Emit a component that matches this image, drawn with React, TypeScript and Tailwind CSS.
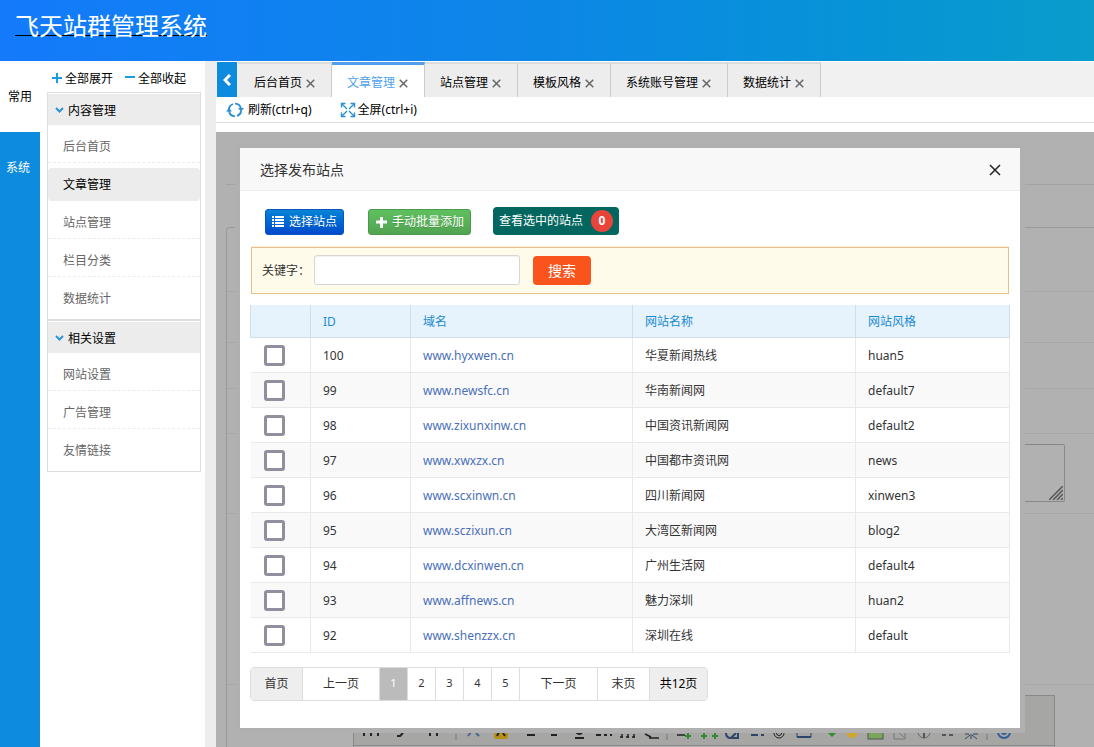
const FONT = "font-['Noto_Sans','Noto_Sans_CJK_SC',sans-serif]";

const MENU = [
  { title: "内容管理", items: ["后台首页", "文章管理", "站点管理", "栏目分类", "数据统计"] },
  { title: "相关设置", items: ["网站设置", "广告管理", "友情链接"] },
];

const TABS = ["后台首页", "文章管理", "站点管理", "模板风格", "系统账号管理", "数据统计"];

const ACTIVE = "文章管理";

const SITES = [
  { id: 100, domain: "www.hyxwen.cn", name: "华夏新闻热线", style: "huan5" },
  { id: 99, domain: "www.newsfc.cn", name: "华南新闻网", style: "default7" },
  { id: 98, domain: "www.zixunxinw.cn", name: "中国资讯新闻网", style: "default2" },
  { id: 97, domain: "www.xwxzx.cn", name: "中国都市资讯网", style: "news" },
  { id: 96, domain: "www.scxinwn.cn", name: "四川新闻网", style: "xinwen3" },
  { id: 95, domain: "www.sczixun.cn", name: "大湾区新闻网", style: "blog2" },
  { id: 94, domain: "www.dcxinwen.cn", name: "广州生活网", style: "default4" },
  { id: 93, domain: "www.affnews.cn", name: "魅力深圳", style: "huan2" },
  { id: 92, domain: "www.shenzzx.cn", name: "深圳在线", style: "default" },
];

const PAGES = ["1", "2", "3", "4", "5"];

function CloseIcon({ className }: { className: string }) {
  return (
    <svg viewBox="0 0 12 12" className={className} fill="none" stroke="currentColor" aria-hidden="true">
      <path d="M1 1l10 10M11 1L1 11" />
    </svg>
  );
}

function RefreshIcon() {
  return (
    <svg width="18" height="16" viewBox="0 0 18 16" fill="none" stroke="#2b8fd0" strokeWidth="1.8" aria-hidden="true">
      <path d="M2.8 7A6.3 6.3 0 0 1 7 2M9 1.700a6.300 6.300 0 0 1 6 5.300" />
      <path d="M15.200 9A6.300 6.300 0 0 1 11 14M9 14.300a6.300 6.300 0 0 1-6-5.300" />
      <path d="M12 6h6l-3 3.500zM6 9.500H0L3 6z" fill="#2b8fd0" stroke="none" />
    </svg>
  );
}

function FullscreenIcon() {
  return (
    <svg width="16" height="16" viewBox="0 0 16 16" fill="none" stroke="#2b8fd0" strokeWidth="1.4" aria-hidden="true">
      <path d="M1.500 5.500v-4h4M10.500 1.500h4v4M14.500 10.500v4h-4M5.500 14.500h-4v-4" />
      <path d="M2 2l5 5M14 2L9 7M14 14L9 9M2 14l5-5" />
    </svg>
  );
}

function ListIcon() {
  return (
    <svg width="12" height="12" fill="currentColor" aria-hidden="true">
      <path d="M0 0h2v2H0zM3 0h9v2H3zM0 3h2v2H0zM3 3h9v2H3zM0 6h2v2H0zM3 6h9v2H3zM0 9h2v2H0zM3 9h9v2H3z" />
    </svg>
  );
}

function PlusIcon() {
  return (
    <svg width="12" height="12" stroke="currentColor" strokeWidth="3" aria-hidden="true">
      <path d="M1 6h11M6.500 1v11" />
    </svg>
  );
}

function Header() {
  return (
    <header className="h-[61px] shrink-0 bg-linear-to-r from-[#147afb] via-[#0d87e6] to-[#0a9ccb] px-[15px] pt-2">
      <a href="#" className="text-2xl leading-9 text-white underline decoration-black decoration-1 underline-offset-0">
        飞天站群管理系统
      </a>
    </header>
  );
}

function Rail() {
  return (
    <nav className="flex w-10 shrink-0 flex-col bg-[#0d8bde] text-center leading-[71px]">
      <a href="#" className="bg-white text-black">
        常用
      </a>
      <a href="#" className="pr-1 text-white">
        系统
      </a>
    </nav>
  );
}

function Sidebar() {
  return (
    <aside className="flex w-[176px] shrink-0 border-r-[11px] border-[#ededed]">
      <div className="ml-[7px] w-[154px]">
        <div className="flex h-[31px] items-center gap-3 pl-[5px] pt-1 text-black">
          <button className="flex items-center gap-[3px]">
            <svg width="10" height="12" stroke="#1b9ce2" strokeWidth="2" aria-hidden="true">
              <path d="M0 5h10M5 0v10" />
            </svg>
            全部展开
          </button>
          <button className="flex items-center gap-[3px]">
            <svg width="10" height="12" stroke="#1b9ce2" strokeWidth="2" aria-hidden="true">
              <path d="M0 4h10" />
            </svg>
            全部收起
          </button>
        </div>
        {MENU.map((group) => (
          <section key={group.title} className="border border-[#dedede] pb-1 pt-px">
            <h3 className="flex h-[31px] items-center gap-1 bg-[#ececec] pl-[7px] pt-0.5 text-black">
              <svg width="9" height="7" fill="none" stroke="#2f93d8" strokeWidth="2" aria-hidden="true">
                <path d="M1 1l3.500 3.500L8 1" />
              </svg>
              {group.title}
            </h3>
            <ul>
              {group.items.map((item) => (
                <li key={item} className="pt-[5px]">
                  <a
                    href="#"
                    className={
                      item === ACTIVE
                        ? "block h-[33px] rounded bg-[#ececec] pl-[15px] leading-[34px] text-black"
                        : "block h-[33px] border-b border-dashed border-[#ececec] pl-[15px] leading-[34px] text-[#666] in-[li:last-child]:border-transparent"
                    }
                  >
                    {item}
                  </a>
                </li>
              ))}
            </ul>
          </section>
        ))}
      </div>
    </aside>
  );
}

function TabBar() {
  return (
    <div className="mt-px flex h-[35px] shrink-0 bg-[#f1f1f1] pl-px">
      <button aria-label="向左" className="flex w-5 items-center justify-center bg-[#0d8bde] text-white">
        <svg width="8" height="12" fill="none" stroke="currentColor" strokeWidth="3" aria-hidden="true">
          <path d="M7 1L2 6l5 5" />
        </svg>
      </button>
      <div className="ml-px flex">
        {TABS.map((tab) => (
          <div
            key={tab}
            className={
              tab === ACTIVE
                ? "flex items-center gap-1 border-r border-t-[3px] border-r-[#ccc] border-t-[#4f9fea] bg-white pl-[15px] pr-4 pt-1"
                : "flex items-center gap-1 border-r border-t-2 border-r-[#ccc] border-t-[#dcdcdc] bg-[#ededed] pl-[15px] pr-4 pt-[5px] first:pl-4"
            }
          >
            <a href="#" className={tab === ACTIVE ? "text-[#4f9fea]" : "text-black"}>
              {tab}
            </a>
            <button aria-label={`关闭${tab}`}>
              <CloseIcon className="size-[9px] stroke-2 text-[#666]" />
            </button>
          </div>
        ))}
      </div>
    </div>
  );
}

/* Bottoms of the rich-text toolbar glyphs, the rest sits under the dialog. */
function EditorTools() {
  return (
    <svg width="702" height="12" fill="none" stroke="#222" strokeWidth="2" aria-hidden="true">
      <path d="M10 0v3M17 0v3M24 0v3M49 0l-3 3h-3M76 0v3M83 0v3" />
      <path d="M102 1v6M313 1v6M633 1v6" stroke="#777" strokeWidth="1" />
      <path d="M114 3l3-4M122 0l3 3" stroke="#4a6590" />
      <rect x="140" y="-4" width="14" height="10" rx="2" fill="#b89018" stroke="none" />
      <path d="M143 3l2-4M149 0l2 3" />
      <path d="M173 2h8M197 2h6M221 -2q5 6 8 0M221 5h9M242 2h5M250 2h3M256 2h2" />
      <path d="M268 1v4M274 1v4M280 1v4M266 4h3M272 4h3M278 4h3M291 1l6 3M295 5h10M323 2h8" strokeWidth="1.500" />
      <path d="M334 0v6M331 3h6M350 0v6M347 3h6M361 0v6M358 3h6" stroke="#318c31" />
      <path d="M372 0q0 5 5 5l5-5M378 5h6V0M397 2h7M407 2h3" stroke="#2f4468" />
      <circle cx="425" cy="0" r="5" strokeWidth="1" />
      <circle cx="425" cy="0" r="2.500" strokeWidth="1" />
      <path d="M443 4h14" stroke="#2b4468" />
      <path d="M443 0v4M457 0v4" stroke="#2b4468" strokeWidth="1" />
      <path d="M474 0h8l-4 4z" fill="#318c31" stroke="none" />
      <circle cx="498" cy="-1" r="6" fill="#cda530" stroke="none" />
      <rect x="514" y="-5" width="15" height="11" fill="#7ba45c" strokeWidth="1" stroke="#555" />
      <path d="M540 0v6h11V0M545 0l5 4" stroke="#777" strokeWidth="1" />
      <circle cx="570" cy="-1" r="6" stroke="#666" strokeWidth="1" />
      <path d="M570 0v5M588 2h4M595 2h4" stroke="#555" />
      <path d="M611 1h4M619 1h5M617 1v5M616 2l-5 4M618 2l5 4" stroke="#33475e" strokeWidth="1" />
      <circle cx="650" cy="-1" r="6" stroke="#34609a" />
      <circle cx="650" cy="-1" r="2" stroke="#34609a" />
    </svg>
  );
}

/* Dimmed article form under the dialog */
function ArticleForm() {
  return (
    <div className="pl-[10px] pt-[52px]">
      <div className="h-[43px] border-t border-[#a2a2a2]" />
      <div className="rounded-tl border-l border-t border-[#999]">
        <div className="h-16 border-b border-[#a5a5a5]" />
        <div className="h-[51px] border-b border-[#a5a5a5]" />
        <div className="h-[46px] border-b border-[#a5a5a5]" />
        <div className="h-[45px] border-b border-[#a5a5a5]" />
        <div className="h-20 border-b border-[#a5a5a5] pl-[126px] pr-[29px] pt-[10px]">
          <div className="flex h-[58px] items-end justify-end rounded-xs border border-[#888] p-px">
            <svg width="14" height="14" stroke="#555" strokeWidth="1.5" aria-hidden="true">
              <path d="M0 14L14 0M4 14L14 4M8 14l6-6M12 14l2-2" />
            </svg>
          </div>
        </div>
        <div className="h-[171px] border-b border-[#a5a5a5]" />
        <div className="pl-[126px] pr-[39px] pt-[10px]">
          <div className="border border-[#888] bg-[#a6a6a4]">
            <div className="flex h-[50px] items-end overflow-hidden border-b border-[#888]">
              <EditorTools />
            </div>
            <div className="h-10 bg-[#b1b1b1]" />
          </div>
        </div>
      </div>
    </div>
  );
}

function SiteTable() {
  return (
    <table className="mt-[11px] w-full table-fixed border-collapse text-left">
      <thead>
        <tr className="h-8 bg-[#e7f3fc] text-[#1b8ad2]">
          <th className="w-[60px] border-x border-b border-[#cfdfea]" aria-label="选择" />
          <th className="w-[100px] border-x border-b border-[#cfdfea] px-3 pt-0.5 font-normal">ID</th>
          <th className="w-[222px] border-x border-b border-[#cfdfea] px-3 pt-0.5 font-normal">域名</th>
          <th className="w-[223px] border-x border-b border-[#cfdfea] px-3 pt-0.5 font-normal">网站名称</th>
          <th className="border-x border-b border-[#cfdfea] px-3 pt-0.5 font-normal">网站风格</th>
        </tr>
      </thead>
      <tbody>
        {SITES.map((site) => (
          <tr key={site.id} className="h-[35px] border-b border-r border-[#e9e9e9] even:bg-[#f9f9f9]">
            <td className="pl-[13px] pt-px">
              <input
                type="checkbox"
                aria-label={site.name}
                className="block size-[21px] appearance-none rounded-[3px] border-[3px] border-[#8f8f9d] bg-white checked:bg-[#0d8bde]"
              />
            </td>
            <td className="border-x border-[#e9e9e9] px-3 pt-0.5">{site.id}</td>
            <td className="border-x border-[#e9e9e9] px-3 pt-0.5">
              <a href="#" className="text-[#4a6fb8]">
                {site.domain}
              </a>
            </td>
            <td className="border-x border-[#e9e9e9] px-3 pt-0.5">{site.name}</td>
            <td className="border-x border-[#e9e9e9] px-3 pt-0.5">{site.style}</td>
          </tr>
        ))}
      </tbody>
    </table>
  );
}

function Pagination() {
  return (
    <nav className="mt-[14px] flex h-[34px] w-fit divide-x divide-[#ddd] overflow-hidden rounded border border-[#ddd]">
      <button className="w-[52px] bg-[#eee]">首页</button>
      <button className="w-[77px]">上一页</button>
      {PAGES.map((page) => (
        <button key={page} className={page === "1" ? "w-7 bg-[#bbb] text-[11px] text-white" : "w-7 text-[11px]"}>
          {page}
        </button>
      ))}
      <button className="w-[78px]">下一页</button>
      <button className="w-[52px]">末页</button>
      <span className="w-[57px] bg-[#eee] text-center leading-8 text-black">共12页</span>
    </nav>
  );
}

function SiteDialog() {
  return (
    <div
      role="dialog"
      aria-label="选择发布站点"
      className="absolute left-6 right-[74px] top-4 bg-white pb-[27px] shadow-[0_0_0_5px_#b0b0b0]"
    >
      <div className="flex h-[43px] items-center justify-between border-b border-[#eee] bg-[#f8f8f8] pl-5 pr-[19px] pt-0.5">
        <h2 className="text-sm text-[#333]">选择发布站点</h2>
        <button aria-label="关闭">
          <CloseIcon className="size-3 stroke-[1.5] text-[#222]" />
        </button>
      </div>
      <div className="px-[10px] pt-4">
        <div className="flex items-center gap-6 pl-[15px]">
          <button className="mt-0.5 flex h-[26px] items-center gap-[5px] rounded-[3px] border border-[#0a55c0] bg-linear-to-b from-[#0a84d6] to-[#0448cc] px-1.5 text-white text-shadow-2xs">
            <ListIcon />
            选择站点
          </button>
          <button className="mt-0.5 flex h-[26px] items-center gap-[5px] rounded-[3px] border border-[#4a9a4a] bg-linear-to-b from-[#5fc05f] to-[#51a351] px-1.5 text-white text-shadow-2xs">
            <PlusIcon />
            手动批量添加
          </button>
          <button className="ml-[-2px] flex h-7 items-center gap-2 rounded bg-[#04675f] px-1.5 text-white">
            查看选中的站点
            <span className="size-[22px] rounded-full bg-[#e8443a] text-center font-bold leading-[22px]">0</span>
          </button>
        </div>
        <form className="mx-px mt-3 flex h-[47px] items-center border border-[#e6c08c] bg-[#fffbeb] pl-[10px] shadow-[0_-1px_0_#fdf0d0]">
          <label htmlFor="keyword">关键字：</label>
          <input
            id="keyword"
            type="text"
            className="-mt-0.5 ml-1 h-[30px] w-[206px] rounded-[3px] border border-[#d6d6d6] bg-white px-2 inset-shadow-2xs"
          />
          <button type="button" className="ml-[13px] h-[29px] w-[58px] rounded bg-[#f9541c] text-sm text-white">
            搜索
          </button>
        </form>
        <SiteTable />
        <Pagination />
      </div>
    </div>
  );
}

export default function App() {
  return (
    <div className={`flex h-screen flex-col overflow-hidden bg-white text-xs text-[#333] ${FONT}`}>
      <Header />
      <div className="flex min-h-0 flex-1">
        <Rail />
        <Sidebar />
        <main className="flex min-w-0 flex-1 flex-col">
          <TabBar />
          <div className="mb-[9px] flex h-[26px] shrink-0 items-center gap-7 border-b border-[#ddd] pl-[10px] text-black">
            <button className="flex items-center gap-1 pt-px">
              <RefreshIcon />
              刷新(ctrl+q)
            </button>
            <button className="flex items-center gap-0.5 pt-px">
              <FullscreenIcon />
              全屏(ctrl+i)
            </button>
          </div>
          <div className="relative min-h-0 flex-1 overflow-hidden bg-[#b1b1b1]">
            <ArticleForm />
            <SiteDialog />
          </div>
        </main>
      </div>
    </div>
  );
}
